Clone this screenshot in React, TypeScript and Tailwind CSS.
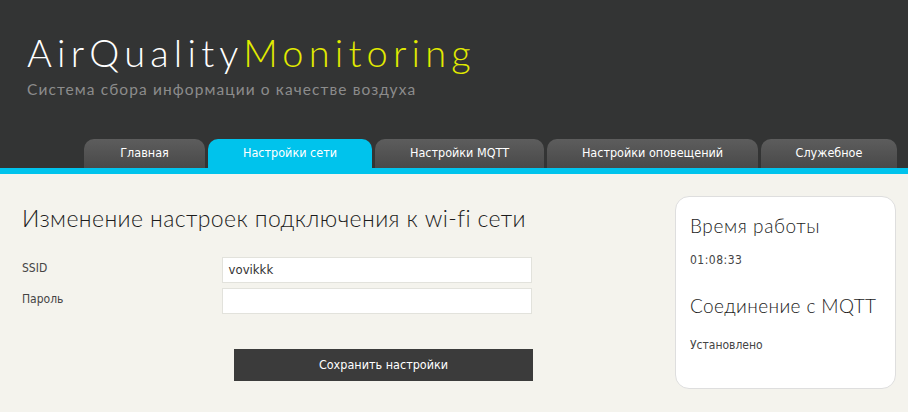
import React from "react";

const tabs = ["Главная", "Настройки сети", "Настройки MQTT", "Настройки оповещений", "Служебное"];
const tabWidths = ["w-[121px]", "w-[164px]", "w-[169px]", "w-[211px]", "w-[136px]"];

export default function App() {
  const gothic = { fontFamily: "'Lato', 'DejaVu Sans', sans-serif" };
  return (
    <div className="w-[908px] h-[412px] overflow-hidden bg-[#f4f3ed] font-['DejaVu_Sans_Condensed',sans-serif]">
      <header className="bg-[#333434] h-[168px] flex flex-col">
        <div className="pl-[27px] pt-[30px]">
          <h1 className="text-[38px] leading-[44px] font-light tracking-[5.2px] text-white" style={gothic}>
            AirQuality<span className="text-[#e1ea00]">Monitoring</span>
          </h1>
          <p className="text-[15.5px] leading-[20px] mt-[5px] text-[#8c8c8c] tracking-[1.1px]" style={gothic}>
            Система сбора информации о качестве воздуха
          </p>
        </div>
        <nav className="mt-auto flex gap-[3px] pl-[84px]">
          {tabs.map((t, i) => (
            <div
              key={t}
              className={`${tabWidths[i]} h-[29px] rounded-t-[10px] flex items-center justify-center text-[12.5px] text-white ${
                i === 1 ? "bg-[#00c3ec]" : "bg-gradient-to-b from-[#5d5d5d] to-[#494949]"
              }`}
            >
              {t}
            </div>
          ))}
        </nav>
      </header>
      <div className="h-[6px] bg-[#00c3ec]" />
      <main className="flex pl-[22px] pr-[12px] pt-[21px]">
        <section className="w-[510px]">
          <h2 className="mt-[8px] text-[23px] leading-[30px] text-[#1c1c1c] font-light tracking-[0.4px]" style={gothic}>
            Изменение настроек подключения к wi-fi сети
          </h2>
          <div className="mt-[24px] flex flex-col gap-[5px]">
            <div className="flex items-center">
              <label className="w-[200px] text-[12px] text-[#444] -mt-[5px]">SSID</label>
              <div className="w-[311px] h-[26px] bg-white border border-[#e2e2dc] px-[6px] flex items-center text-[13px] text-[#333]">
                vovikkk
              </div>
            </div>
            <div className="flex items-center">
              <label className="w-[200px] text-[12px] text-[#444] -mt-[5px]">Пароль</label>
              <div className="w-[311px] h-[26px] bg-white border border-[#e2e2dc]" />
            </div>
          </div>
          <div className="mt-[35px] ml-[212px] w-[299px] h-[32px] bg-[#3b3b3b] text-white text-[12.5px] flex items-center justify-center">
            Сохранить настройки
          </div>
        </section>
        <aside className="ml-auto mt-[1px] w-[221px] h-[193px] bg-white border border-[#dedede] rounded-[14px] pl-[14px] pt-[17px]">
          <h3 className="text-[19px] leading-[24px] text-[#1c1c1c] font-light tracking-[0.6px]" style={gothic}>Время работы</h3>
          <p className="mt-[13px] text-[12px] text-[#444] tracking-[0.5px]">01:08:33</p>
          <h3 className="mt-[25px] text-[19px] leading-[24px] text-[#1c1c1c] font-light tracking-[0.4px]" style={gothic}>Соединение с MQTT</h3>
          <p className="mt-[18px] text-[12px] text-[#444]">Установлено</p>
        </aside>
      </main>
    </div>
  );
}
